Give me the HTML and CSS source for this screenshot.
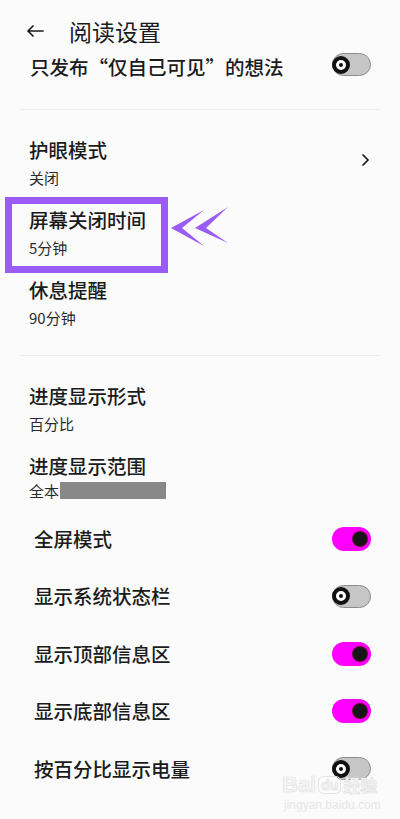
FILE: index.html
```html
<!DOCTYPE html>
<html lang="zh-CN">
<head>
<meta charset="utf-8">
<title>阅读设置</title>
<link rel="stylesheet" href="styles.css">
</head>
<body>
<div class="screen">
  <header class="header">
    <svg class="back" width="18" height="12" viewBox="0 0 18 12"><path d="M17 6H2M7 1L2 6L7 11" fill="none" stroke="#1b1b1b" stroke-width="1.7" stroke-linecap="round" stroke-linejoin="round"/></svg>
    <h1 class="page-title">阅读设置</h1>
  </header>

  <div class="row-top">
    <span class="label">只发布“仅自己可见”的想法</span>
    <span class="toggle off raised"><span class="knob"></span></span>
  </div>

  <div class="divider first"></div>

  <section class="group">
    <div class="item">
      <div class="item-text">
        <div class="title">护眼模式</div>
        <div class="sub">关闭</div>
      </div>
      <svg class="chev" width="9" height="14" viewBox="0 0 9 14"><path d="M1.5 1.5L7 7L1.5 12.5" fill="none" stroke="#1b1b1b" stroke-width="1.7"/></svg>
    </div>
    <div class="item highlighted">
      <div class="item-text">
        <div class="title">屏幕关闭时间</div>
        <div class="sub">5分钟</div>
      </div>
      <div class="mark-box"></div>
      <svg class="mark-arrows" width="60" height="44" viewBox="0 0 60 44"><path d="M0 22L33 4L11 22L33 40Z" fill="#9a5cf5"/><path d="M24 22L57 1L35 22L57 37Z" fill="#9a5cf5"/></svg>
    </div>
    <div class="item">
      <div class="item-text">
        <div class="title">休息提醒</div>
        <div class="sub">90分钟</div>
      </div>
    </div>
  </section>

  <div class="divider second"></div>

  <section class="group g3">
    <div class="item">
      <div class="item-text">
        <div class="title">进度显示形式</div>
        <div class="sub">百分比</div>
      </div>
    </div>
    <div class="item">
      <div class="item-text">
        <div class="title">进度显示范围</div>
        <div class="sub tight">全本<span class="redact"></span></div>
      </div>
    </div>
  </section>

  <section class="toggles">
    <div class="trow"><span class="label">全屏模式</span><span class="toggle on"><span class="knob"></span></span></div>
    <div class="trow"><span class="label">显示系统状态栏</span><span class="toggle off"><span class="knob"></span></span></div>
    <div class="trow"><span class="label">显示顶部信息区</span><span class="toggle on"><span class="knob"></span></span></div>
    <div class="trow"><span class="label">显示底部信息区</span><span class="toggle on"><span class="knob"></span></span></div>
    <div class="trow"><span class="label">按百分比显示电量</span><span class="toggle off"><span class="knob"></span></span></div>
  </section>

  <div class="watermark">
    <div class="wm-logo"><span class="wm-bai">Bai</span><span class="wm-du">du</span><span class="wm-jy">经验</span></div>
    <div class="wm-url">jingyan.baidu.com</div>
  </div>
</div>
</body>
</html>
```

FILE: styles.css
```css
html, body {
  margin: 0;
  padding: 0;
}
body {
  background: #fbfbfb;
  font-family: "Noto Sans CJK SC", "Noto Sans", sans-serif;
  color: #1b1b1b;
}
.screen {
  position: relative;
  width: 400px;
  height: 819px;
  overflow: hidden;
  background: #fbfbfb;
}
.header {
  display: flex;
  align-items: center;
  gap: 25px;
  height: 42px;
  margin-top: 10px;
  padding-left: 26px;
}
.page-title {
  margin: 0;
  font-size: 23px;
  font-weight: 400;
  line-height: 1;
  color: #1b1b1b;
}
.row-top {
  display: flex;
  align-items: center;
  justify-content: space-between;
  height: 26px;
  padding: 2px 29px 0 30px;
}
.toggle.raised { margin-top: -5px; }
.label {
  font-size: 19.5px;
  font-weight: 500;
  line-height: 24px;
  color: #1b1b1b;
}
.divider {
  height: 1px;
  background: #ededed;
  margin: 0 20px;
}
.divider.first { margin-top: 29px; }
.divider.second { margin-top: 17px; }
.group { padding-top: 18px; }
.item {
  position: relative;
  display: flex;
  justify-content: space-between;
  padding: 10px 29px;
  height: 50px;
}
.item-text {
  display: flex;
  flex-direction: column;
}
.title {
  font-size: 19.5px;
  font-weight: 500;
  line-height: 24px;
  color: #1b1b1b;
}
.sub {
  margin-top: 6px;
  font-size: 15px;
  line-height: 20px;
  color: #2a2a2a;
  display: flex;
  align-items: center;
}
.sub.tight { margin-top: 2.5px; }
.redact {
  display: inline-block;
  width: 106px;
  height: 17px;
  background: #888;
  margin-left: 1px;
}
.chev {
  margin-top: 15px;
  margin-right: 1px;
}
.mark-box {
  position: absolute;
  left: 5px;
  top: -1px;
  width: 163px;
  height: 76px;
  box-sizing: border-box;
  border: 7px solid #9a5cf5;
}
.mark-arrows {
  position: absolute;
  left: 171px;
  top: 8px;
}
.toggles {
  display: flex;
  flex-direction: column;
  margin-top: -4px;
}
.trow {
  display: flex;
  align-items: center;
  justify-content: space-between;
  height: 57.5px;
  padding: 0 29px 0 34px;
}
.toggle {
  position: relative;
  display: flex;
  align-items: center;
  width: 39px;
  height: 23px;
  box-sizing: border-box;
  border-radius: 12px;
}
.toggle.off {
  background: #c6c6c6;
  border: 1.5px solid #8c8c8c;
  justify-content: flex-start;
}
.toggle.off .knob {
  width: 10px;
  height: 10px;
  border-radius: 50%;
  background: #fff;
  border: 4.5px solid #111;
  box-sizing: content-box;
  margin-left: -1px;
  position: relative;
}
.toggle.off .knob::after {
  content: "";
  position: absolute;
  left: 3px;
  top: 3px;
  width: 4px;
  height: 4px;
  border-radius: 50%;
  background: #111;
}
.toggle.on {
  background: #ff00ff;
  justify-content: flex-end;
  padding-right: 4px;
  height: 24px;
}
.toggle.on .knob {
  width: 14px;
  height: 14px;
  border-radius: 50%;
  background: #161616;
  box-shadow: 0 0 0 1px #6a0a3a;
}
.watermark {
  position: absolute;
  left: 282px;
  top: 772px;
  pointer-events: none;
}
.wm-logo {
  display: flex;
  align-items: center;
  gap: 2px;
  font-family: "Liberation Sans", sans-serif;
  font-size: 22px;
  font-weight: 700;
  line-height: 26px;
  color: #f6f6f6;
  -webkit-text-stroke: 0.7px #e2e2e2;
}
.wm-du {
  font-size: 14px;
  line-height: 16px;
  border: 1.5px solid #e2e2e2;
  border-radius: 5px;
  padding: 0 2px;
}
.wm-jy {
  font-family: "Noto Sans CJK SC", sans-serif;
  font-size: 17px;
}
.wm-url {
  font-family: "Liberation Sans", sans-serif;
  font-size: 12px;
  line-height: 14px;
  color: #e6e6e6;
  margin-left: 2px;
}
```
